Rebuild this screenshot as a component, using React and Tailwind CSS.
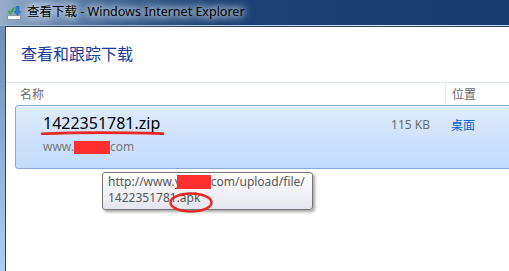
import React from "react";

function TitleIcon() {
  return (
    <svg width="16" height="16" viewBox="0 0 16 16" className="shrink-0">
      <rect x="1.5" y="10.5" width="13" height="4" fill="#f4f6f8" stroke="#8a98a8" />
      <path d="M2.5 6 L4.5 8.5 L8 2.5" fill="none" stroke="#2fae2f" strokeWidth="1.8" />
      <path d="M10 1.5 h3 v5 h2 l-3.5 4 l-3.5 -4 h2 z" fill="#2f7fd6" stroke="#1c5aa8" strokeWidth="0.6" />
    </svg>
  );
}

export default function App() {
  return (
    <div className="relative w-[509px] h-[271px] overflow-hidden flex flex-col bg-[#173c70] font-['Noto_Sans','Noto_Sans_CJK_SC',sans-serif]">
      {/* title bar */}
      <div className="h-[25px] shrink-0 flex items-center pl-[6px] gap-[5px] bg-[linear-gradient(to_right,#97acc6_0%,#7390b4_8%,#3c6293_22%,#1b4175_42%,#163b6f_100%)]">
        <TitleIcon />
        <span className="text-[12.5px] leading-none text-black font-['Noto_Sans','Noto_Sans_CJK_SC',sans-serif] [text-shadow:0_0_6px_#e4ecf6,0_0_10px_#dde7f3,0_0_14px_#d5e1f0]">
          查看下载 - Windows Internet Explorer
        </span>
      </div>
      <div className="h-px shrink-0 bg-[linear-gradient(to_right,#9fb6d2,#bcd3ee_60%,#dbe9f8_80%,#bcd3ee)]" />
      {/* frame + content */}
      <div className="flex-1 flex bg-[linear-gradient(#6d8db3,#93b6da_60%,#a9cff0)]">
        <div className="w-[5px] shrink-0" />
        <div className="flex-1 flex flex-col bg-white border-l border-t border-[#33475f] pt-[15px]">
          <div className="pl-[15px] h-[22px] leading-[22px] text-[16px] text-[#1a3a9e] font-['Noto_Sans_CJK_SC',sans-serif]">
            查看和跟踪下载
          </div>
          {/* header */}
          <div className="mt-[18px] h-[23px] flex border-t border-[#dfe8f4] text-[12px] text-[#6b6b6b]">
            <div className="flex-1 flex items-center pl-[14px] font-['Noto_Sans_CJK_SC',sans-serif]">名称</div>
            <div className="w-[64px] shrink-0 flex items-center pl-[6px] border-l border-[#e6ebf2] font-['Noto_Sans_CJK_SC',sans-serif]">位置</div>
          </div>
          {/* selected item */}
          <div className="ml-[9px] mr-[-3px] h-[64px] flex rounded-[3px] border border-[#84aad9] bg-[linear-gradient(#dfecfd,#cfe3fc_50%,#c2dbfb)] shadow-[inset_0_1px_0_#f0f6ff]">
            <div className="flex-1 flex flex-col pl-[27px] pt-[6px]">
              <div className="h-[22px] leading-[22px] text-[16px] text-black">1422351781.zip</div>
              <div className="mt-[5px] h-[16px] leading-[16px] text-[12px] text-[#777777] flex items-center">
                <span>www.</span>
                <span className="inline-block w-[36px] h-[13px] bg-[#fe2f2f]" />
                <span>com</span>
              </div>
            </div>
            <div className="pt-[8px] pr-[15px] text-[12px] text-[#6b6b6b]">
              <div className="h-[22px] leading-[22px]">115 KB</div>
            </div>
            <div className="w-[66px] shrink-0 pl-[6px] pt-[8px] text-[12px] text-[#0a66cc] font-['Noto_Sans_CJK_SC',sans-serif]">
              <div className="h-[22px] leading-[22px]">桌面</div>
            </div>
          </div>
        </div>
      </div>

      {/* red underline annotation */}
      <svg className="absolute left-[40px] top-[130px]" width="126" height="7" viewBox="0 0 126 7">
        <path d="M2 3.8 C 30 2.6, 80 2.4, 123 3.6" fill="none" stroke="#ef2424" strokeWidth="2.6" strokeLinecap="round" />
      </svg>

      {/* tooltip */}
      <div className="absolute left-[102px] top-[172px] w-[211px] h-[38px] rounded-[3px] border border-[#767676] bg-[linear-gradient(#ffffff,#e4e5f0)] shadow-[2px_2px_3px_rgba(0,0,0,0.35)] pl-[5px] pt-[1px] text-[12px] leading-[16px] text-[#575757] whitespace-nowrap">
        <div className="flex items-center h-[16px]">
          <span>http://www.y</span>
          <span className="inline-block w-[34px] h-[14px] bg-[#fe2f2f] ml-[-4px]" />
          <span>com/upload/file/</span>
        </div>
        <div className="h-[16px]">1422351781.apk</div>
      </div>

      {/* red ellipse annotation */}
      <svg className="absolute left-[168px] top-[191px]" width="46" height="23" viewBox="0 0 46 23">
        <ellipse cx="23" cy="11.5" rx="20.5" ry="9" fill="none" stroke="#ef2424" strokeWidth="2.4" />
      </svg>
    </div>
  );
}
